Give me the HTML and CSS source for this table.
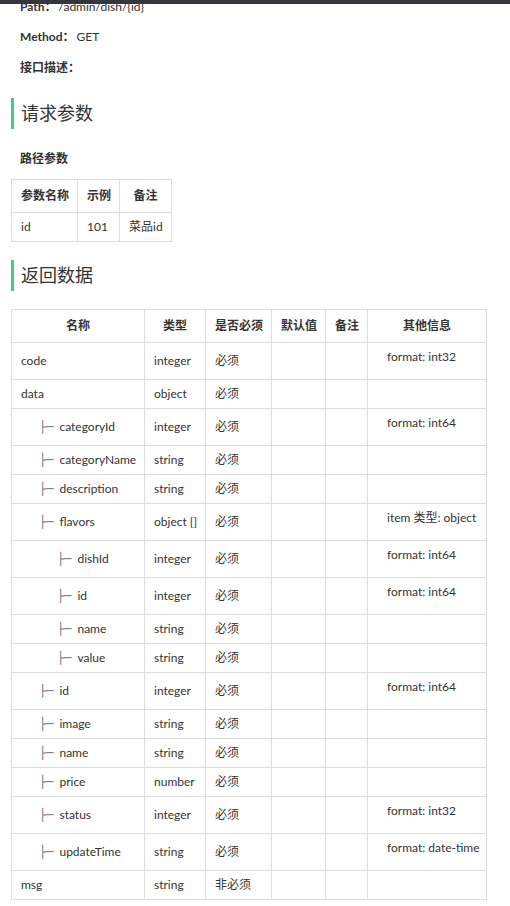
FILE: index.html
```html
<!DOCTYPE html>
<html lang="zh-CN">
<head>
<meta charset="utf-8">
<title>菜品详情</title>
<link rel="stylesheet" href="styles.css">
</head>
<body>
<div class="topbar"></div>
<div class="doc">
  <div class="meta">
    <p><b>Path：</b><span class="val">/admin/dish/{id}</span></p>
    <p><b>Method：</b><span class="val">GET</span></p>
    <p class="last"><b>接口描述：</b></p>
  </div>

  <h2 class="sec">请求参数</h2>
  <p class="sub"><b>路径参数</b></p>
  <table class="grid params">
    <colgroup>
      <col class="p1"><col class="p2"><col class="p3">
    </colgroup>
    <thead>
      <tr><th>参数名称</th><th>示例</th><th>备注</th></tr>
    </thead>
    <tbody>
      <tr><td>id</td><td>101</td><td>菜品id</td></tr>
    </tbody>
  </table>

  <h2 class="sec sec2">返回数据</h2>
  <table class="grid resp">
    <colgroup>
      <col class="c1"><col class="c2"><col class="c3"><col class="c4"><col class="c5"><col class="c6">
    </colgroup>
    <thead>
      <tr><th>名称</th><th>类型</th><th>是否必须</th><th>默认值</th><th>备注</th><th>其他信息</th></tr>
    </thead>
    <tbody>
      <tr><td>code</td><td>integer</td><td>必须</td><td></td><td></td><td><p class="info">format: int32</p></td></tr>
      <tr><td>data</td><td>object</td><td>必须</td><td></td><td></td><td></td></tr>
      <tr><td><span class="l1"><span class="tree">├─</span>categoryId</span></td><td>integer</td><td>必须</td><td></td><td></td><td><p class="info">format: int64</p></td></tr>
      <tr><td><span class="l1"><span class="tree">├─</span>categoryName</span></td><td>string</td><td>必须</td><td></td><td></td><td></td></tr>
      <tr><td><span class="l1"><span class="tree">├─</span>description</span></td><td>string</td><td>必须</td><td></td><td></td><td></td></tr>
      <tr><td><span class="l1"><span class="tree">├─</span>flavors</span></td><td>object []</td><td>必须</td><td></td><td></td><td><p class="info">item 类型: object</p></td></tr>
      <tr><td><span class="l2"><span class="tree">├─</span>dishId</span></td><td>integer</td><td>必须</td><td></td><td></td><td><p class="info">format: int64</p></td></tr>
      <tr><td><span class="l2"><span class="tree">├─</span>id</span></td><td>integer</td><td>必须</td><td></td><td></td><td><p class="info">format: int64</p></td></tr>
      <tr><td><span class="l2"><span class="tree">├─</span>name</span></td><td>string</td><td>必须</td><td></td><td></td><td></td></tr>
      <tr><td><span class="l2"><span class="tree">├─</span>value</span></td><td>string</td><td>必须</td><td></td><td></td><td></td></tr>
      <tr><td><span class="l1"><span class="tree">├─</span>id</span></td><td>integer</td><td>必须</td><td></td><td></td><td><p class="info">format: int64</p></td></tr>
      <tr><td><span class="l1"><span class="tree">├─</span>image</span></td><td>string</td><td>必须</td><td></td><td></td><td></td></tr>
      <tr><td><span class="l1"><span class="tree">├─</span>name</span></td><td>string</td><td>必须</td><td></td><td></td><td></td></tr>
      <tr><td><span class="l1"><span class="tree">├─</span>price</span></td><td>number</td><td>必须</td><td></td><td></td><td></td></tr>
      <tr><td><span class="l1"><span class="tree">├─</span>status</span></td><td>integer</td><td>必须</td><td></td><td></td><td><p class="info">format: int32</p></td></tr>
      <tr><td><span class="l1"><span class="tree">├─</span>updateTime</span></td><td>string</td><td>必须</td><td></td><td></td><td><p class="info">format: date-time</p></td></tr>
      <tr><td>msg</td><td>string</td><td>非必须</td><td></td><td></td><td></td></tr>
    </tbody>
  </table>
</div>
</body>
</html>
```

FILE: styles.css
```css
html, body {
  margin: 0;
  padding: 0;
  background: #fff;
}
body {
  font-family: Lato, "Noto Sans CJK SC", sans-serif;
  font-size: 12px;
  color: #333;
}
.topbar {
  position: fixed;
  top: 0;
  left: 0;
  right: 0;
  height: 4px;
  background: #33363b;
  z-index: 10;
}
.doc {
  padding: 0 0 0 11px;
}
.meta {
  margin-top: -3px;
  padding-left: 9px;
}
.meta p {
  margin: 0 0 10px;
  line-height: 20px;
  height: 20px;
}
.meta p.last {
  margin-bottom: 0;
  margin-top: 11px;
}
.meta b {
  font-weight: bold;
}
.val {
  margin-left: 2px;
}
.sec {
  margin: 20px 0 0;
  font-size: 18px;
  font-weight: normal;
  line-height: 31px;
  height: 31px;
  border-left: 3px solid #4ec78c;
  padding-left: 7px;
  color: #333;
}
.sec2 {
  margin-top: 18px;
}
.sub {
  margin: 20px 0 10px 9px;
  line-height: 20px;
  height: 20px;
}
.grid {
  border-collapse: collapse;
}
.grid th, .grid td {
  border: 1px solid #dcdcdc;
  padding: 8px 9px;
  line-height: 12px;
  height: 12px;
  vertical-align: middle;
  text-align: left;
  white-space: nowrap;
}
.grid th {
  padding: 10px 9px;
  font-weight: bold;
  text-align: center;
}
.params {
  table-layout: fixed;
  width: 161px;
}
.p1 { width: 66px; }
.p2 { width: 42px; }
.p3 { width: 52px; }
.resp {
  margin-top: 18px;
  table-layout: fixed;
  width: 476px;
}
.c1 { width: 133px; }
.c2 { width: 61px; }
.c3 { width: 66px; }
.c4 { width: 54px; }
.c5 { width: 42px; }
.c6 { width: 119px; }
.info {
  margin: 0 0 8px 10px;
  line-height: 12px;
}
.l1 { padding-left: 18px; }
.l2 { padding-left: 36px; }
.tree {
  font-family: "DejaVu Sans Mono", monospace;
  line-height: 0;
  color: #777;
  margin-right: 6px;
}
```
